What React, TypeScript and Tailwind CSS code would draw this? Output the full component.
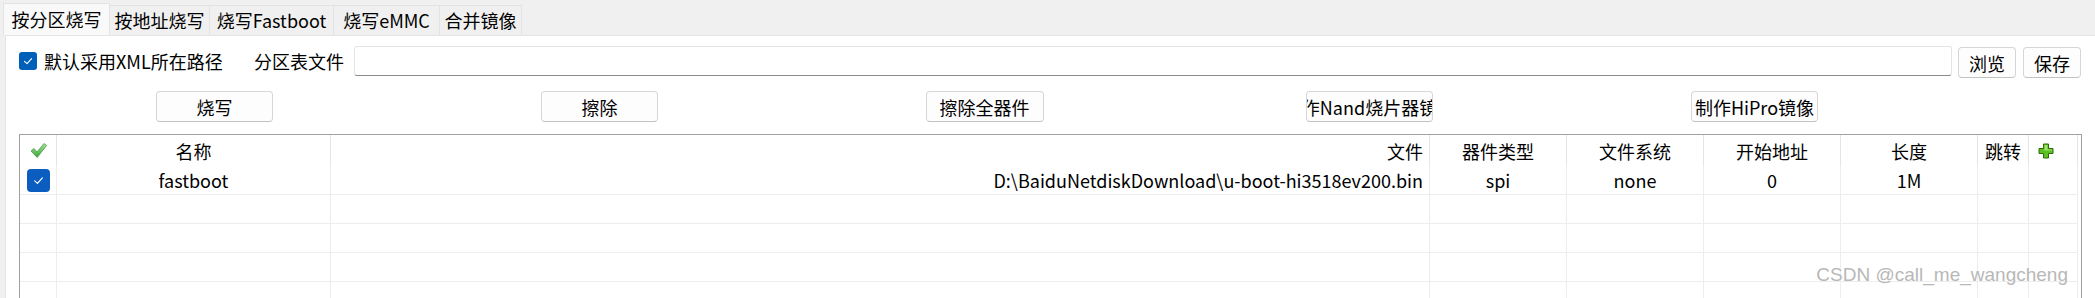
import React from 'react';

const cols = 'grid grid-cols-[37px_274px_1099px_137px_137px_137px_137px_51px_49px_1fr]';

const tabs = [
  { label: '按分区烧写', w: 'w-[107px]', active: true },
  { label: '按地址烧写', w: 'w-[100px]' },
  { label: '烧写Fastboot', w: 'w-[124px]' },
  { label: '烧写eMMC', w: 'w-[106px]' },
  { label: '合并镜像', w: 'w-[82px]' },
];

const actions = [
  { label: '烧写', w: 'w-[117px]' },
  { label: '擦除', w: 'w-[117px]' },
  { label: '擦除全器件', w: 'w-[118px]' },
  { label: '制作Nand烧片器镜像', w: 'w-[127px]' },
  { label: '制作HiPro镜像', w: 'w-[127px]' },
];

const rows = [
  { checked: true, name: 'fastboot', file: 'D:\\BaiduNetdiskDownload\\u-boot-hi3518ev200.bin', type: 'spi', fs: 'none', start: '0', len: '1M' },
  null,
  null,
  null,
  null,
];

const Tick = ({ size = 12 }: { size?: number }) => (
  <svg width={size} height={size} viewBox="0 0 12 12" fill="none">
    <path d="M2.5 6.3 L5 8.6 L9.6 3.6" stroke="white" strokeWidth="1.1" strokeLinecap="round" strokeLinejoin="round" />
  </svg>
);

const GreenCheck = () => (
  <svg width="17" height="17" viewBox="0 0 17 17">
    <defs>
      <linearGradient id="gc" x1="0" y1="0" x2="0" y2="1">
        <stop offset="0" stopColor="#a6e596" />
        <stop offset="1" stopColor="#3aa43a" />
      </linearGradient>
    </defs>
    <path d="M1 9 L4 6.5 L7 10 L14 1.5 L16.5 3.5 L7.2 15.5 Z" fill="url(#gc)" stroke="#4a9a4a" strokeWidth="0.8" strokeLinejoin="round" />
  </svg>
);

const GreenPlus = () => (
  <svg width="16" height="16" viewBox="0 0 16 16">
    <path d="M5.5 1 H10.5 V5.5 H15 V10.5 H10.5 V15 H5.5 V10.5 H1 V5.5 H5.5 Z" fill="#5cc020" stroke="#2c6a08" strokeWidth="1" strokeLinejoin="round" />
    <path d="M6.5 2 H9.5 V6.5 H14 V7.5 H9.5 H6.5 V2 Z" fill="#9be36a" />
  </svg>
);

const Button = ({ label, w }: { label: string; w: string }) => (
  <button className={`${w} h-[31px] flex items-center justify-center overflow-hidden whitespace-nowrap rounded-[4px] border border-[#d6d6d6] border-b-[#c2c2c2] bg-[#fdfdfd] text-[18px] leading-none text-black`}>
    {label}
  </button>
);

export default function App() {
  return (
    <div className="relative w-[2095px] h-[298px] overflow-hidden bg-[#f0f0f0] font-['Noto_Sans_CJK_SC',sans-serif] text-black">
      {/* tab bar */}
      <div className="flex h-[35px] items-end pl-[3px]">
        {tabs.map((t) =>
          t.active ? (
            <div key={t.label} className={`${t.w} h-[32px] flex items-center justify-center border border-b-0 border-[#e3e3e3] bg-[#f9f9f9] text-[18px]`}>
              {t.label}
            </div>
          ) : (
            <div key={t.label} className={`${t.w} h-[30px] flex items-center justify-center border-r border-t border-[#e3e3e3] bg-[#f0f0f0] text-[18px]`}>
              {t.label}
            </div>
          )
        )}
      </div>

      {/* pane */}
      <div className="ml-[5px] h-[263px] border-l border-t border-[#e5e5e5] bg-white pl-[13px] pr-[14px]">
        <div className="mt-[10px] flex h-[31px] items-start">
          <label className="flex w-[235px] h-[30px] items-center">
            <span className="flex h-[18px] w-[18px] items-center justify-center rounded-[3px] bg-[#005fb8]">
              <Tick />
            </span>
            <span className="ml-[7px] text-[18px] leading-none">默认采用XML所在路径</span>
          </label>
          <span className="flex h-[30px] items-center text-[18px] leading-none">分区表文件</span>
          <div className="ml-[10px] h-[30px] flex-1 rounded-[3px] border border-[#e5e5e5] border-b-[#8a8a8a] bg-white" />
          <div className="ml-[6px] mt-[1px] flex gap-[7px]">
            <Button label="浏览" w="w-[58px]" />
            <Button label="保存" w="w-[58px]" />
          </div>
        </div>

        <div className="mt-[14px] ml-[3px] grid w-[1925px] grid-cols-5">
          {actions.map((a) => (
            <div key={a.label} className="flex justify-center">
              <Button label={a.label} w={a.w} />
            </div>
          ))}
        </div>

        {/* table */}
        <div className="mt-[12px] h-[200px] w-[2063px] border border-[#a0a0a0] bg-white text-[18px] leading-none">
          <div className={`${cols} h-[31px]`}>
            <div className="flex items-center justify-center border-r border-[#e5e5e5]">
              <GreenCheck />
            </div>
            <div className="flex items-center justify-center border-r border-[#e5e5e5]">名称</div>
            <div className="flex items-center justify-end border-r border-[#e5e5e5] pr-[6px]">文件</div>
            <div className="flex items-center justify-center border-r border-[#e5e5e5]">器件类型</div>
            <div className="flex items-center justify-center border-r border-[#e5e5e5]">文件系统</div>
            <div className="flex items-center justify-center border-r border-[#e5e5e5]">开始地址</div>
            <div className="flex items-center justify-center border-r border-[#e5e5e5]">长度</div>
            <div className="flex items-center justify-center border-r border-[#e5e5e5]">跳转</div>
            <div className="flex items-center justify-start border-r border-[#e5e5e5] pl-[9px]">
              <GreenPlus />
            </div>
            <div />
          </div>

          {rows.map((r, i) => (
            <div key={i} className={`${cols} h-[29px]`}>
              <div className="flex items-center justify-center border-b border-r border-[#ededed]">
                {r?.checked && (
                  <span className="flex h-[23px] w-[23px] items-center justify-center rounded-[4px] bg-[#0b5dc0]">
                    <Tick size={13} />
                  </span>
                )}
              </div>
              <div className="flex items-center justify-center border-b border-r border-[#ededed]">{r?.name}</div>
              <div className="flex items-center justify-end border-b border-r border-[#ededed] pr-[6px] whitespace-nowrap">{r?.file}</div>
              <div className="flex items-center justify-center border-b border-r border-[#ededed]">{r?.type}</div>
              <div className="flex items-center justify-center border-b border-r border-[#ededed]">{r?.fs}</div>
              <div className="flex items-center justify-center border-b border-r border-[#ededed]">{r?.start}</div>
              <div className="flex items-center justify-center border-b border-r border-[#ededed]">{r?.len}</div>
              <div className="border-b border-r border-[#ededed]" />
              <div className="border-b border-r border-[#ededed]" />
              <div />
            </div>
          ))}
        </div>
      </div>

      {/* watermark */}
      <div className="absolute right-[27px] top-[265px] font-['Liberation_Sans',sans-serif] text-[19px] leading-none text-[#b8b8b8]">
        CSDN @call_me_wangcheng
      </div>
    </div>
  );
}
